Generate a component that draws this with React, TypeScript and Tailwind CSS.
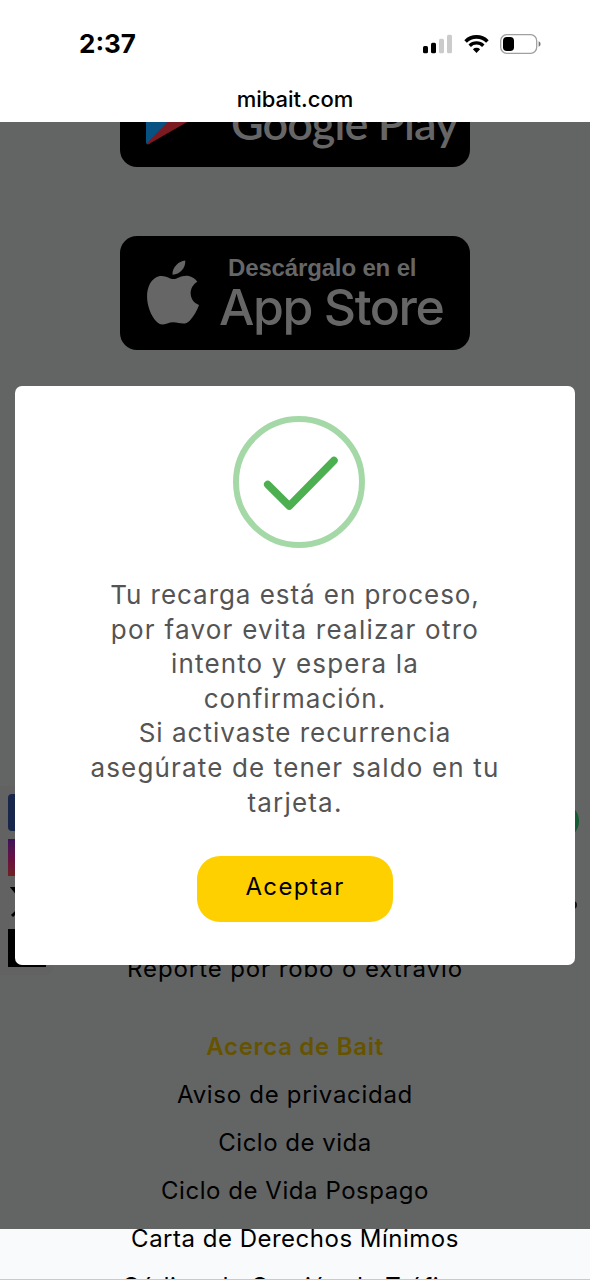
import { clsx } from 'clsx';

const messageLines = [
    { text: 'Tu recarga está en proceso,', tracking: 'tracking-[0.95px]' },
    { text: 'por favor evita realizar otro', tracking: 'tracking-[1.25px]' },
    { text: 'intento y espera la', tracking: 'tracking-[1.15px]' },
    { text: 'confirmación.', tracking: 'tracking-[1.05px]' },
    { text: 'Si activaste recurrencia', tracking: 'tracking-[1px]' },
    { text: 'asegúrate de tener saldo en tu', tracking: 'tracking-[1.15px]' },
    { text: 'tarjeta.', tracking: 'tracking-[1.2px]' },
];

const aboutLinks = [
    { text: 'Aviso de privacidad', tracking: 'tracking-[0.7px]' },
    { text: 'Ciclo de vida', tracking: 'tracking-[0.5px]' },
    { text: 'Ciclo de Vida Pospago', tracking: 'tracking-[0.55px]' },
    { text: 'Carta de Derechos Mínimos', tracking: 'tracking-[0.5px]' },
    { text: 'Código de Gestión de Tráfico', tracking: 'tracking-[0.5px]' },
];

function StatusBar() {
    return (
        <div className="flex h-[88px] items-center justify-between pl-[79px] pr-[49px]">
            <span className="text-[26px] font-bold leading-none">2:37</span>
            <div className="flex items-center">
                <svg width="29" height="20" viewBox="0 0 29 20" className="mr-3">
                    <rect x="0" y="12" width="5" height="7.3" rx="1.5" />
                    <rect x="8" y="8.7" width="5" height="10.6" rx="1.5" />
                    <rect x="16" y="4.8" width="5" height="14.5" rx="1.5" fill="#cbcbcb" />
                    <rect x="24" y="0.7" width="5" height="18.6" rx="1.5" fill="#cbcbcb" />
                </svg>
                <svg width="25" height="20" viewBox="0 0 25 20" className="mr-[11px]">
                    <path d="M1.6 7.4a15.4 15.4 0 0 1 21.8 0" fill="none" stroke="#000" strokeWidth="3.6" />
                    <path d="M5.7 11.7a9.6 9.6 0 0 1 13.6 0" fill="none" stroke="#000" strokeWidth="3.4" />
                    <path d="M8.900 15.200a5.200 5.200 0 0 1 7.200 0L12.500 19z" />
                </svg>
                <svg width="41" height="20" viewBox="0 0 41 20">
                    <rect x="0.7" y="0.7" width="36" height="18.6" rx="6" fill="none" stroke="#a0a0a0" strokeWidth="1.3" />
                    <rect x="3" y="3" width="11" height="14" rx="3.8" />
                    <path d="M38.600 7.200q2 .8 2 2.800t-2 2.800z" fill="#777" />
                </svg>
            </div>
        </div>
    );
}

function GooglePlayBadge() {
    return (
        <div className="flex h-[114px] w-[350px] shrink-0 items-end rounded-[17px] bg-black pl-[26px]">
            <svg width="60" height="68" viewBox="0 0 60 68" className="mb-[22px] shrink-0">
                <path d="M0 3v62q0 3 3 2L32 34 3 0Q0 0 0 3" fill="#075283" />
                <path d="M3 0l40 24-11 10z" fill="#00622f" />
                <path d="M43 24l14 8q3 2 0 4l-14 8-11-10z" fill="#665000" />
                <path d="M2 67.500l41-23.500-11-10L1 66z" fill="#7c1a22" />
            </svg>
            <span className="mb-[21px] ml-[25px] whitespace-nowrap font-['Lato'] text-[45px] font-semibold leading-none tracking-[-0.950px] text-[#666]">
                Google Play
            </span>
        </div>
    );
}

function AppStoreBadge() {
    return (
        <div className="flex h-[114px] w-[350px] shrink-0 items-center rounded-[17px] bg-black pl-[27px] text-[#666]">
            <svg width="53" height="66" viewBox="0 0 54 66" fill="currentColor" className="shrink-0">
                <path d="M39 0c.6 7.600-5.600 14.500-13 14.400C25.500 7.200 32 .6 39 0z" />
                <path d="M27 18.800c3.500 0 7-3.500 13-3.500 4.500 0 8.800 2.400 11.300 6.300-9.700 5.800-9 19.400 1.700 23.600-2 5.500-5.600 12-9.500 16-5.200 5.300-10.500 1.500-16.500 1.500s-9.500 3.600-14 2C7.800 62 2.600 53.500.7 43.500-1.600 31 2.200 18.500 13 15.800c5.500-1.300 10.500 3 14 3z" />
            </svg>
            <div className="ml-[19px] whitespace-nowrap font-['Liberation_Sans']">
                <p className="ml-[9px] text-[24px] font-bold leading-[28px] tracking-[-0.150px]">Descárgalo en el</p>
                <p className="font-['Inter'] text-[50px] font-medium leading-[50px] tracking-[-1.450px]">App Store</p>
            </div>
        </div>
    );
}

function SocialRail() {
    return (
        <div className="absolute left-0 top-[786px] flex w-[53px] flex-col gap-2 rounded-r-lg bg-[#626262] py-2 pl-2">
            <div className="h-[37px] w-[38px] rounded bg-[#18264b]" />
            <div className="h-[37px] w-[38px] bg-linear-to-b from-[#3d1257] via-[#651044] to-[#712021]" />
            <svg width="38" height="37" viewBox="0 0 38 37" stroke="#000" fill="none">
                <path d="M5 4.500h7l21 26h-7z" strokeWidth="3" />
                <path d="M32 5 4 32" strokeWidth="3" />
            </svg>
            <div className="h-[38px] w-[38px] bg-black" />
        </div>
    );
}

function SuccessDialog() {
    return (
        <div
            role="dialog"
            className="absolute left-[15px] top-[386px] flex h-[579px] w-[560px] flex-col items-center rounded-[7px] bg-white pt-[30px]"
        >
            <svg width="132" height="132" viewBox="0 0 132 132" fill="none" className="ml-2">
                <circle cx="66" cy="66" r="63" stroke="#a5d8a7" strokeWidth="6" />
                <path d="M34.700 68.500l21.600 21.500L101 44.500" stroke="#4caf50" strokeWidth="7.500" strokeLinecap="round" strokeLinejoin="round" />
            </svg>
            <div className="mt-[30px] whitespace-nowrap text-center text-[26px] leading-[34.600px] text-[#545454]">
                {messageLines.map((line) => (
                    <p key={line.text}>
                        <span className={line.tracking}>{line.text}</span>
                    </p>
                ))}
            </div>
            <button className="mt-[36px] h-[66px] w-[196px] rounded-[23px] bg-[#ffd000] pb-1 text-[24px] tracking-[1.4px] text-black">
                Aceptar
            </button>
        </div>
    );
}

export default function App() {
    return (
        <div className="relative h-[1280px] w-[590px] overflow-hidden bg-[#f9fafc] font-['Inter',sans-serif] text-black">
            <header className="relative z-10 h-[122px] bg-white">
                <StatusBar />
                <p className="text-center text-[22px] font-medium leading-[22px]">mibait.com</p>
            </header>

            <div className="absolute inset-x-0 top-[122px] h-[1107px] bg-[#636564]" />

            <main className="relative -mt-[69px] flex flex-col items-center">
                <GooglePlayBadge />
                <div className="mt-[69px]">
                    <AppStoreBadge />
                </div>
                <nav className="mt-[595px] flex flex-col items-center whitespace-nowrap text-[24px]">
                    <a className="leading-[48px] tracking-[0.9px]">Reporte por robo o extravío</a>
                    <h2 className="mt-[30px] font-semibold leading-[48px] tracking-[0.7px] text-[#665300]">Acerca de Bait</h2>
                    {aboutLinks.map((link) => (
                        <a key={link.text} className={clsx('leading-[48px]', link.tracking)}>
                            {link.text}
                        </a>
                    ))}
                </nav>
            </main>

            <SocialRail />
            <div className="absolute left-[543px] top-[803px] size-9 rounded-full bg-[#145c32]" />
            <div className="absolute left-[569px] top-[901px] size-2 rounded-full bg-[#111]" />
            <SuccessDialog />
            <div className="absolute inset-x-0 bottom-0 h-px bg-[#c9cacb]" />
        </div>
    );
}
